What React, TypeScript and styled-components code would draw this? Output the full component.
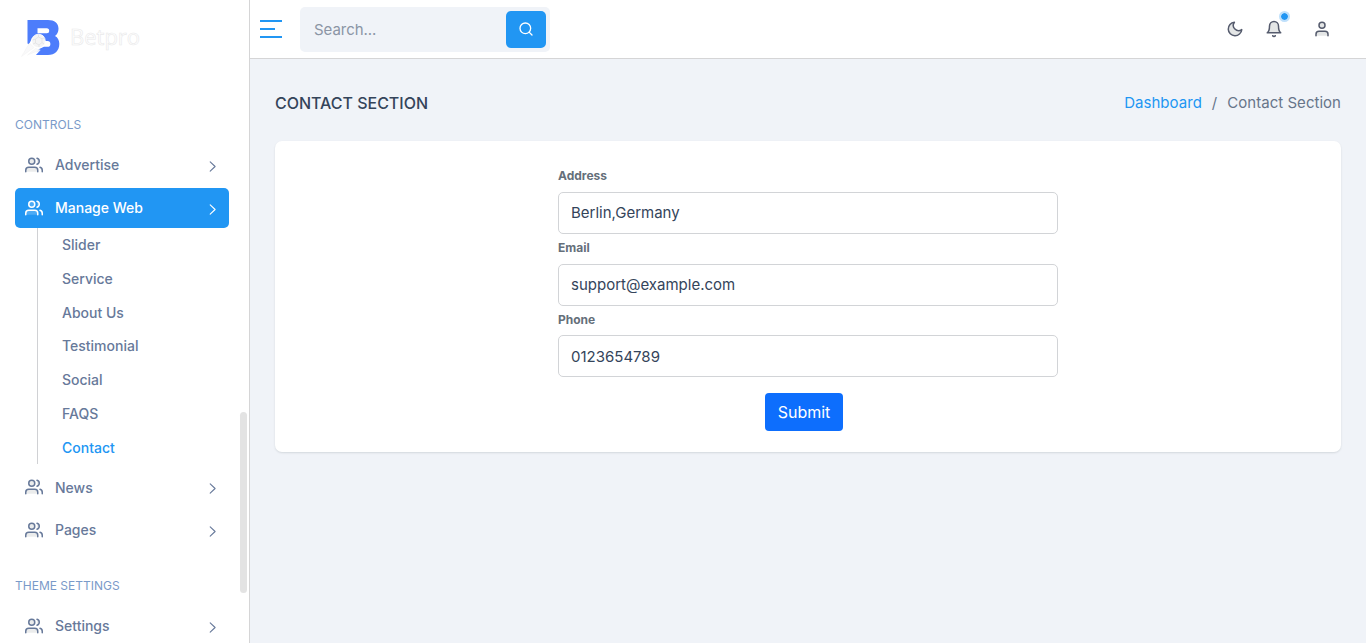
import React from "react";
import styled, { createGlobalStyle, css } from "styled-components";

const GlobalStyle = createGlobalStyle`
  *, *::before, *::after { box-sizing: border-box; }
  html, body { margin: 0; height: 100%; }
  body {
    background: #f0f3f8;
    color: #34445a;
    font-family: Inter, "Liberation Sans", sans-serif;
    font-size: 15px;
    line-height: 1.5;
    overflow: hidden;
  }
  button, input { font-family: inherit; margin: 0; }
  a { text-decoration: none; color: inherit; }
`;

const Shell = styled.div`
  display: grid;
  grid-template-columns: 250px 1fr;
  height: 643px;
  overflow: hidden;
`;

const Sidebar = styled.aside`
  display: flex;
  height: 643px;
  overflow: hidden;
  background: #fff;
  border-right: 1px solid #d5d5d6;
`;

const SidebarMain = styled.div`
  width: 229px;
  flex: none;
  padding-left: 15px;
`;

const Brand = styled.div`
  display: flex;
  align-items: flex-start;
  height: 108px;
  padding: 16px 0 0 5px;
`;

const LogoMark = styled.svg`
  display: block;
  width: 44px;
  height: 44px;
`;

const BrandName = styled.span`
  margin: 2px 0 0 6px;
  font-family: "Open Sans", sans-serif;
  font-size: 22px;
  line-height: 36px;
  color: #fff;
  -webkit-text-stroke: 0.6px #e9e9ea;
`;

const Caption = styled.div<{ $top?: number }>`
  height: 34px;
  margin-top: ${(p) => p.$top ?? 0}px;
  padding-top: 8px;
  font-size: 12px;
  line-height: 18px;
  color: #7a9ac9;
`;

const Item = styled.a<{ $active?: boolean; $gap?: number }>`
  display: flex;
  align-items: center;
  height: 40px;
  margin-top: ${(p) => p.$gap ?? 3}px;
  padding: 0 11px 0 10px;
  border-radius: 5px;
  font-size: 14px;
  font-weight: 500;
  color: #67799a;
  ${(p) =>
    p.$active &&
    css`
      background: #2196f3;
      color: #fff;
    `}
`;

const ItemIcon = styled.svg`
  width: 18px;
  height: 18px;
  margin: -1px 12px 0 0;
  flex: none;
`;

const ItemLabel = styled.span<{ $lift?: boolean }>`
  flex: 1;
  padding-bottom: ${(p) => (p.$lift ? 2 : 0)}px;
`;

const ItemArrow = styled.svg`
  width: 11px;
  height: 11px;
  margin-top: 3px;
  flex: none;
`;

const SubMenu = styled.nav`
  display: flex;
  flex-direction: column;
  height: 236px;
  margin-left: 22px;
  padding-left: 24px;
  border-left: 1px solid #d0d1d4;
`;

const SubItem = styled.a<{ $active?: boolean }>`
  height: 33.8px;
  line-height: 33.8px;
  font-size: 14px;
  font-weight: 500;
  color: ${(p) => (p.$active ? "#2196f3" : "#67799a")};
`;

const ScrollThumb = styled.div`
  width: 7px;
  height: 181px;
  margin: 412px 0 0 11px;
  border-radius: 4px;
  background: #e3e3e3;
`;

const Main = styled.div`
  min-width: 0;
`;

const Header = styled.header`
  display: flex;
  align-items: center;
  height: 59px;
  padding: 0 35px 0 10px;
  background: #fff;
  border-bottom: 1px solid #d5d5d6;
`;

const Burger = styled.div`
  display: flex;
  flex-direction: column;
  gap: 6px;
  width: 22px;
  margin-right: 18px;
`;

const BurgerLine = styled.span<{ $w: number }>`
  width: ${(p) => p.$w}px;
  height: 2px;
  background: #2196f3;
`;

const Search = styled.form`
  display: flex;
  align-items: flex-start;
  width: 250px;
  height: 45px;
  padding: 4px 4px 4px 14px;
  margin-top: 1px;
  border-radius: 5px;
  background: #f0f3f8;
`;

const SearchInput = styled.input`
  flex: 1;
  min-width: 0;
  height: 36px;
  padding: 0;
  border: 0;
  outline: 0;
  background: transparent;
  font-size: 15px;
  letter-spacing: -0.05px;
  color: #34445a;
  &::placeholder { color: #8b95a5; opacity: 1; }
`;

const SearchButton = styled.button`
  display: flex;
  align-items: center;
  justify-content: center;
  width: 40px;
  height: 37px;
  padding: 0 0 1px;
  border: 0;
  border-radius: 5px;
  background: #2196f3;
`;

const Tools = styled.div`
  display: flex;
  align-items: center;
  margin-left: auto;
`;

const ToolIcon = styled.div<{ $left?: number }>`
  position: relative;
  display: flex;
  margin-left: ${(p) => p.$left ?? 0}px;
`;

const Dot = styled.span`
  position: absolute;
  left: 14px;
  top: -9px;
  width: 11px;
  height: 11px;
  border: 2px solid #bfe0fb;
  border-radius: 50%;
  background: #2196f3;
  background-clip: padding-box;
`;

const TitleRow = styled.div`
  display: flex;
  align-items: center;
  justify-content: space-between;
  height: 82px;
  padding: 6px 25px 0;
`;

const Title = styled.h1`
  margin: 0;
  font-size: 16px;
  font-weight: 500;
  line-height: 24px;
  letter-spacing: -0.02px;
  color: #34445a;
`;

const Crumbs = styled.nav`
  display: flex;
  gap: 10px;
  font-size: 15px;
  letter-spacing: 0.03px;
  color: #67758a;
`;

const CrumbLink = styled.a`
  color: #2196f3;
`;

const Card = styled.section`
  display: flex;
  justify-content: center;
  height: 311px;
  margin: 0 25px;
  padding-top: 23.8px;
  border-radius: 7px;
  background: #fff;
  box-shadow: 0 1px 2px rgba(56, 65, 74, 0.15);
`;

const Form = styled.form`
  display: flex;
  flex-direction: column;
  width: 500px;
`;

const Label = styled.label`
  height: 27px;
  padding-top: 2.3px;
  font-size: 12px;
  font-weight: 700;
  line-height: 18px;
  color: #656f7a;
`;

const Field = styled.input`
  width: 500px;
  height: 42px;
  margin-bottom: 2.75px;
  padding: 0 12px;
  border: 1px solid #d2d4d7;
  border-radius: 5px;
  outline: 0;
  background: #fff;
  font-size: 15px;
  color: #34445a;
`;

const Submit = styled.button`
  width: 78px;
  height: 38px;
  margin: 13.2px 0 0 207px;
  padding: 0;
  border: 0;
  border-radius: 4px;
  background: #0d6efd;
  color: #fff;
  font-size: 16px;
`;

const UsersIcon = ({ active }: { active?: boolean }) => (
  <ItemIcon
    viewBox="0 0 24 24"
    fill={active ? "rgba(255,255,255,0.2)" : "rgba(90,95,100,0.12)"}
    stroke="currentColor"
    strokeWidth="2"
    strokeLinecap="round"
    strokeLinejoin="round"
  >
    <path d="M17 21v-2a4 4 0 0 0-4-4H5a4 4 0 0 0-4 4v2" />
    <circle cx="9" cy="7" r="4" />
    <path d="M23 21v-2a4 4 0 0 0-3-3.87" />
    <path d="M16 3.13a4 4 0 0 1 0 7.75" />
  </ItemIcon>
);

type MenuItemProps = { label: string; active?: boolean; gap?: number; lift?: boolean };

const MenuItem = ({ label, active, gap, lift }: MenuItemProps) => (
  <Item href="#" $active={active} $gap={gap}>
    <UsersIcon active={active} />
    <ItemLabel $lift={lift}>{label}</ItemLabel>
    <ItemArrow viewBox="0 0 11 11" fill="none" stroke="currentColor" strokeWidth="1.1" strokeLinecap="round" strokeLinejoin="round">
      <path d="M3.200 0.8 8.100 5.500 3.200 10.200" />
    </ItemArrow>
  </Item>
);

const Logo = () => (
  <LogoMark viewBox="0 0 44 44">
    <path
      fill="#4d7dfb"
      fillRule="evenodd"
      d="M7.5 4H28c6.500 0 10.500 3.200 10.500 8.800 0 3.300-1.400 5.700-3.500 7.200 2.800 1.500 4.300 4.300 4.300 7.700 0 6.900-4.300 11.300-11.300 11.300H15l4-5-11.500-6.500zM17.500 12.300v5h9.200a2.500 2.500 0 0 0 0-5z"
    />
    <path d="M12 22 18 18.500l5 1 2 5.500h2.500a2.800 2.800 0 0 1 0 5.800H24l-8 3.700-8-4z" fill="#fff" />
    <circle cx="18.500" cy="25" r="6.800" fill="#f4f4f5" stroke="#fff" strokeWidth="0.8" />
    <path d="m15.500 23 3-2 3.500 1.800v3.700L19 29l-3.500-2zM12.500 24l3-1M18.500 18.500v2.500M22 22.800l2.500-1M22 26.500l2 1.500M19 29v2M15.500 27l-2.500 1" fill="none" stroke="#dedfe1" strokeWidth="0.7" />
    <path d="M9.500 27 1.500 40.500 14 31.500zM15.500 32.500 7.500 39 20 34z" fill="#f9f9fa" stroke="#f0f0f1" strokeWidth="0.5" />
    <path d="M13 38.500 21 33.500l-6 6.500z" fill="#fff" />
  </LogoMark>
);

const outline = {
  width: 18,
  height: 18,
  viewBox: "0 0 24 24",
  fill: "rgba(75,85,85,0.15)",
  stroke: "#555b6d",
  strokeWidth: 2,
  strokeLinecap: "round" as const,
  strokeLinejoin: "round" as const,
};

const subItems = ["Slider", "Service", "About Us", "Testimonial", "Social", "FAQS", "Contact"];

const fields = [
  { id: "address", label: "Address", value: "Berlin,Germany" },
  { id: "email", label: "Email", value: "support@example.com" },
  { id: "phone", label: "Phone", value: "0123654789" },
];

export default function App() {
  return (
    <>
      <GlobalStyle />
      <Shell>
        <Sidebar>
          <SidebarMain>
            <Brand>
              <Logo />
              <BrandName>Betpro</BrandName>
            </Brand>
            <Caption>CONTROLS</Caption>
            <MenuItem label="Advertise" lift />
            <MenuItem label="Manage Web" active lift />
            <SubMenu>
              {subItems.map((s) => (
                <SubItem key={s} href="#" $active={s === "Contact"}>
                  {s}
                </SubItem>
              ))}
            </SubMenu>
            <MenuItem label="News" />
            <MenuItem label="Pages" lift />
            <Caption $top={19}>THEME SETTINGS</Caption>
            <MenuItem label="Settings" lift />
          </SidebarMain>
          <ScrollThumb />
        </Sidebar>
        <Main>
          <Header>
            <Burger>
              <BurgerLine $w={22} />
              <BurgerLine $w={15} />
              <BurgerLine $w={22} />
            </Burger>
            <Search>
              <SearchInput placeholder="Search..." />
              <SearchButton type="button" aria-label="Search">
                <svg width="16" height="16" viewBox="0 0 24 24" fill="none" stroke="#fff" strokeWidth="2" strokeLinecap="round" strokeLinejoin="round">
                  <circle cx="11" cy="11" r="8" />
                  <path d="m21 21-4.350-4.350" />
                </svg>
              </SearchButton>
            </Search>
            <Tools>
              <ToolIcon>
                <svg {...outline}>
                  <path d="M21 12.790A9 9 0 1 1 11.210 3 7 7 0 0 0 21 12.790z" />
                </svg>
              </ToolIcon>
              <ToolIcon $left={21}>
                <svg {...outline}>
                  <path d="M18 8A6 6 0 0 0 6 8c0 7-3 9-3 9h18s-3-2-3-9" />
                  <path d="M13.730 21a2 2 0 0 1-3.460 0" />
                </svg>
                <Dot />
              </ToolIcon>
              <ToolIcon $left={30}>
                <svg {...outline}>
                  <path d="M20 21v-2a4 4 0 0 0-4-4H8a4 4 0 0 0-4 4v2" />
                  <circle cx="12" cy="7" r="4" />
                </svg>
              </ToolIcon>
            </Tools>
          </Header>
          <TitleRow>
            <Title>CONTACT SECTION</Title>
            <Crumbs>
              <CrumbLink href="#">Dashboard</CrumbLink>
              <span>/</span>
              <span>Contact Section</span>
            </Crumbs>
          </TitleRow>
          <Card>
            <Form>
              {fields.map((f) => (
                <React.Fragment key={f.id}>
                  <Label htmlFor={f.id}>{f.label}</Label>
                  <Field id={f.id} defaultValue={f.value} />
                </React.Fragment>
              ))}
              <Submit type="button">Submit</Submit>
            </Form>
          </Card>
        </Main>
      </Shell>
    </>
  );
}
